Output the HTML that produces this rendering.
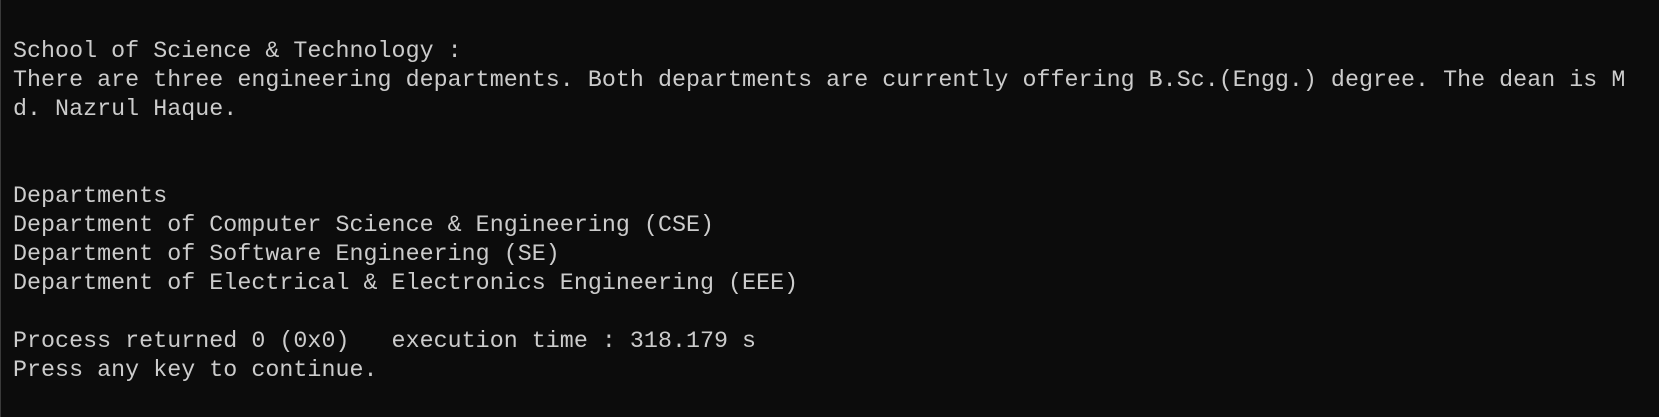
<!DOCTYPE html>
<html><head><meta charset="utf-8"><style>
html,body{margin:0;padding:0;background:#0c0c0c;width:1659px;height:417px;overflow:hidden}
body{border-left:1px solid #3a3a3a;box-sizing:border-box}
pre{margin:0;position:absolute;left:13px;top:37px;font-family:"Liberation Mono",monospace;font-size:23.3px;line-height:29px;color:#cccccc;letter-spacing:0.04px;white-space:pre}
</style></head><body><pre>School of Science &amp; Technology :
There are three engineering departments. Both departments are currently offering B.Sc.(Engg.) degree. The dean is M
d. Nazrul Haque.


Departments
Department of Computer Science &amp; Engineering (CSE)
Department of Software Engineering (SE)
Department of Electrical &amp; Electronics Engineering (EEE)

Process returned 0 (0x0)   execution time : 318.179 s
Press any key to continue.</pre></body></html>
